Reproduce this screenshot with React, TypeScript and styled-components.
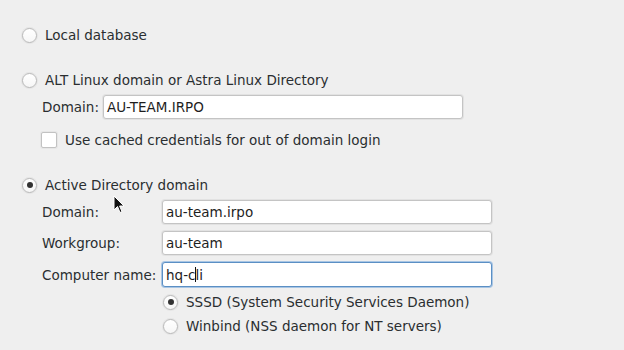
import React from 'react';
import styled, { createGlobalStyle } from 'styled-components';

const Global = createGlobalStyle`
  html, body {
    margin: 0;
    background: #efefef;
  }
  body {
    font-family: 'DejaVu Sans', 'Liberation Sans', sans-serif;
    font-size: 13.5px;
    color: #2a2e30;
  }
`;

const Page = styled.div`
  position: relative;
  width: 624px;
  height: 350px;
  box-sizing: border-box;
  padding: 25px 0 0 22px;
  overflow: hidden;
`;

const OptionRow = styled.label<{ $gap?: number }>`
  display: flex;
  align-items: center;
  height: 20px;
  margin-top: ${(p) => p.$gap ?? 0}px;
  gap: 8px;
  white-space: nowrap;
`;

const RadioMark = styled.span<{ $on?: boolean }>`
  position: relative;
  flex: none;
  width: 15px;
  height: 15px;
  box-sizing: border-box;
  border-radius: 50%;
  border: 1px solid #b9b9b9;
  background: linear-gradient(#ffffff, #f6f6f6);
  box-shadow: 0 0 0 1px #e4e4e4;
  &::after {
    content: '';
    display: ${(p) => (p.$on ? 'block' : 'none')};
    position: absolute;
    left: 3.5px;
    top: 3.5px;
    width: 6px;
    height: 6px;
    border-radius: 50%;
    background: #333;
  }
`;

const CheckMark = styled.span`
  flex: none;
  width: 16px;
  height: 16px;
  box-sizing: border-box;
  border: 1px solid #c2c2c2;
  border-radius: 2px;
  background: #fff;
  box-shadow: 0 0 0 1px #e6e6e6;
`;

const Indent = styled.div<{ $gap?: number }>`
  margin-top: ${(p) => p.$gap ?? 0}px;
  padding-left: 20px;
`;

const CheckRow = styled(OptionRow)`
  margin-left: -1px;
`;

const FieldRow = styled.div<{ $gap?: number; $label: number }>`
  display: grid;
  grid-template-columns: ${(p) => p.$label}px auto;
  align-items: center;
  margin-top: ${(p) => p.$gap ?? 0}px;
  white-space: nowrap;
`;

const Field = styled.div<{ $width: number; $focus?: boolean }>`
  width: ${(p) => p.$width}px;
  height: ${(p) => (p.$focus ? 25 : 24)}px;
  box-sizing: border-box;
  display: flex;
  align-items: center;
  padding: 0 3px;
  background: #fff;
  border: 1px solid ${(p) => (p.$focus ? '#5b8fc4' : '#c4c4c4')};
  border-radius: 3px;
  box-shadow: ${(p) => (p.$focus ? '0 0 0 1px #a9c6e4' : '0 0 0 1px #e2e2e2')};
  color: #1e1e1e;
`;

const Caret = styled.span`
  display: inline-block;
  width: 1px;
  height: 15px;
  background: #111;
  margin: 0 -1px 0 0;
  vertical-align: middle;
`;

const SubOptions = styled.div`
  padding-left: 141px;
  margin-top: 5px;
`;

const Pointer = styled.svg`
  position: absolute;
  left: 113px;
  top: 195px;
`;

export default function App() {
  return (
    <>
      <Global />
      <Page>
        <OptionRow>
          <RadioMark />
          Local database
        </OptionRow>

        <OptionRow $gap={25}>
          <RadioMark />
          ALT Linux domain or Astra Linux Directory
        </OptionRow>
        <Indent $gap={5}>
          <FieldRow $label={61}>
            Domain:
            <Field $width={360}>AU-TEAM.IRPO</Field>
          </FieldRow>
        </Indent>
        <Indent $gap={11}>
          <CheckRow>
            <CheckMark />
            Use cached credentials for out of domain login
          </CheckRow>
        </Indent>

        <OptionRow $gap={25}>
          <RadioMark $on />
          Active Directory domain
        </OptionRow>
        <Indent $gap={5}>
          <FieldRow $label={120}>
            Domain:
            <Field $width={330}>au-team.irpo</Field>
          </FieldRow>
          <FieldRow $label={120} $gap={7}>
            Workgroup:
            <Field $width={330}>au-team</Field>
          </FieldRow>
          <FieldRow $label={120} $gap={7}>
            Computer name:
            <Field $width={330} $focus>
              hq-c<Caret />li
            </Field>
          </FieldRow>
        </Indent>
        <SubOptions>
          <OptionRow>
            <RadioMark $on />
            SSSD (System Security Services Daemon)
          </OptionRow>
          <OptionRow $gap={4}>
            <RadioMark />
            Winbind (NSS daemon for NT servers)
          </OptionRow>
        </SubOptions>

        <Pointer width="12" height="19" viewBox="0 0 12 19">
          <path d="M1 1 L1 15 L4.5 11.5 L7 17.5 L9 16.6 L6.6 11 L11 11 Z" fill="#111" stroke="#fff" strokeWidth="1" />
        </Pointer>
      </Page>
    </>
  );
}
